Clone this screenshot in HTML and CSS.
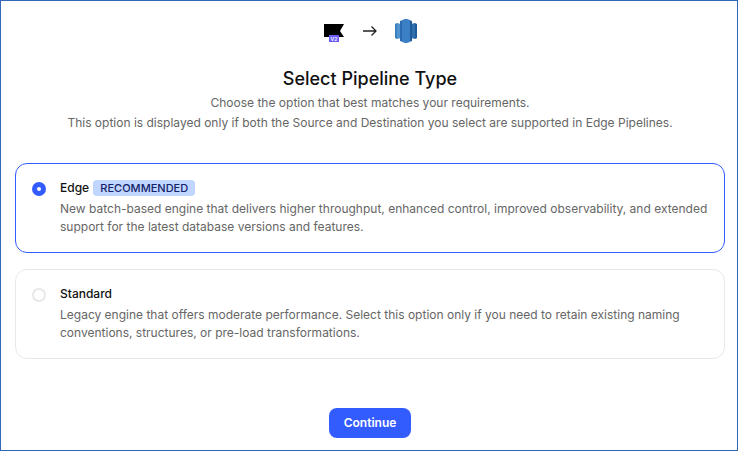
FILE: index.html
```html
<!DOCTYPE html>
<html lang="en">
<head>
    <meta charset="UTF-8">
    <meta name="viewport" content="width=device-width, initial-scale=1.0">
    <title>Select Pipeline Type</title>
    <link rel="stylesheet" href="styles.css">
</head>
<body>
    <main class="page">
        <!-- Source and destination -->
        <div class="route">
            <svg class="route-icon" viewBox="0 0 24 24" role="img" aria-label="Source">
                <path d="M2 5h20l-4 7 4 6H2z" fill="#000"/>
                <rect x="7" y="16" width="10" height="7" fill="#6a5cf5"/>
                <text class="version" x="12" y="22" text-anchor="middle">V2</text>
            </svg>
            <svg class="route-arrow" viewBox="0 0 16 16" aria-hidden="true">
                <path d="M1 8h13M9.5 3.5L14 8l-4.5 4.5" fill="none" stroke="#222" stroke-width="1.3"/>
            </svg>
            <svg class="route-icon" viewBox="0 0 24 24" role="img" aria-label="Destination">
                <path d="M1 5l2-1v16l-2-1z" fill="#3b7fc0"/>
                <path d="M3 4l4 1v14l-4 1z" fill="#5294cf"/>
                <path d="M23 5l-2-1v16l2-1z" fill="#205b99"/>
                <path d="M21 4l-4 1v14l4 1z" fill="#2e6fb0"/>
                <path d="M6 2l6-2v24l-6-2z" fill="#2a6bb0"/>
                <path d="M12 0l6 2v20l-6 2z" fill="#205b99"/>
                <path d="M8 1l4-1 4 1v22l-4 1-4-1z" fill="#3b7fc4"/>
            </svg>
        </div>

        <h1>Select Pipeline Type</h1>
        <p class="intro">Choose the option that best matches your requirements.<br>
            This option is displayed only if both the Source and Destination you select are supported in Edge Pipelines.</p>

        <form class="pipeline-form">
            <div class="options">
                <label class="option">
                    <input type="radio" name="pipeline" value="edge" checked>
                    <span class="option-body">
                        <span class="option-title">Edge <span class="badge">RECOMMENDED</span></span>
                        <span class="option-text">New batch-based engine that delivers higher throughput, enhanced control, improved observability, and extended support for the latest database versions and features.</span>
                    </span>
                </label>
                <label class="option">
                    <input type="radio" name="pipeline" value="standard">
                    <span class="option-body">
                        <span class="option-title">Standard</span>
                        <span class="option-text">Legacy engine that offers moderate performance. Select this option only if you need to retain existing naming conventions, structures, or pre-load transformations.</span>
                    </span>
                </label>
            </div>
            <button type="button" class="continue">Continue</button>
        </form>
    </main>
</body>
</html>
```
FILE: styles.css
```css
* {
    box-sizing: border-box;
}
body {
    margin: 0;
    font-family: Inter, "Liberation Sans", sans-serif;
    font-size: 12px;
    color: #111;
    background: #fff;
}
.page {
    min-height: 100vh;
    padding: 18px 12px 12px 14px;
    border: 1px solid #3266b8;
}
.route {
    display: flex;
    justify-content: center;
    align-items: center;
    gap: 16px;
}
.route-icon {
    width: 24px;
    height: 24px;
}
.route-arrow {
    width: 16px;
    height: 16px;
}
.version {
    font-size: 5px;
    font-weight: 600;
    fill: #fff;
}
h1 {
    margin: 24px 0 2px;
    font-size: 18px;
    font-weight: 500;
    line-height: 24px;
    text-align: center;
}
.intro {
    margin: 0 0 30px;
    line-height: 20px;
    text-align: center;
    color: #666;
}
.options {
    display: grid;
    gap: 16px;
}
.option {
    display: flex;
    gap: 14px;
    padding: 15px 16px 16px;
    border: 1px solid #e8e8e8;
    border-radius: 12px;
    cursor: pointer;
}
.option:has(input:checked) {
    border-color: #335cff;
}
.option input {
    appearance: none;
    flex: none;
    width: 14px;
    height: 14px;
    margin: 3px 0;
    border: 2px solid #e8e8e8;
    border-radius: 50%;
}
.option input:checked {
    border: 5px solid #335cff;
}
.option-title {
    display: block;
    margin-bottom: 3px;
    font-weight: 500;
    line-height: 18px;
}
.option-text {
    display: block;
    line-height: 18px;
    color: #666;
}
/* Dark blue tag next to the option name */
.badge {
    display: inline-block;
    margin-left: 1px;
    padding: 0 7px;
    border-radius: 4px;
    font-size: 11px;
    line-height: 16px;
    color: #122368;
    background: #c0d5ff;
}
.continue {
    display: block;
    margin: 49px auto 0;
    padding: 6px 15px;
    border: 0;
    border-radius: 8px;
    font-family: inherit;
    font-size: 12px;
    font-weight: 600;
    line-height: 18px;
    color: #fff;
    background: #335cff;
    cursor: pointer;
}
```
